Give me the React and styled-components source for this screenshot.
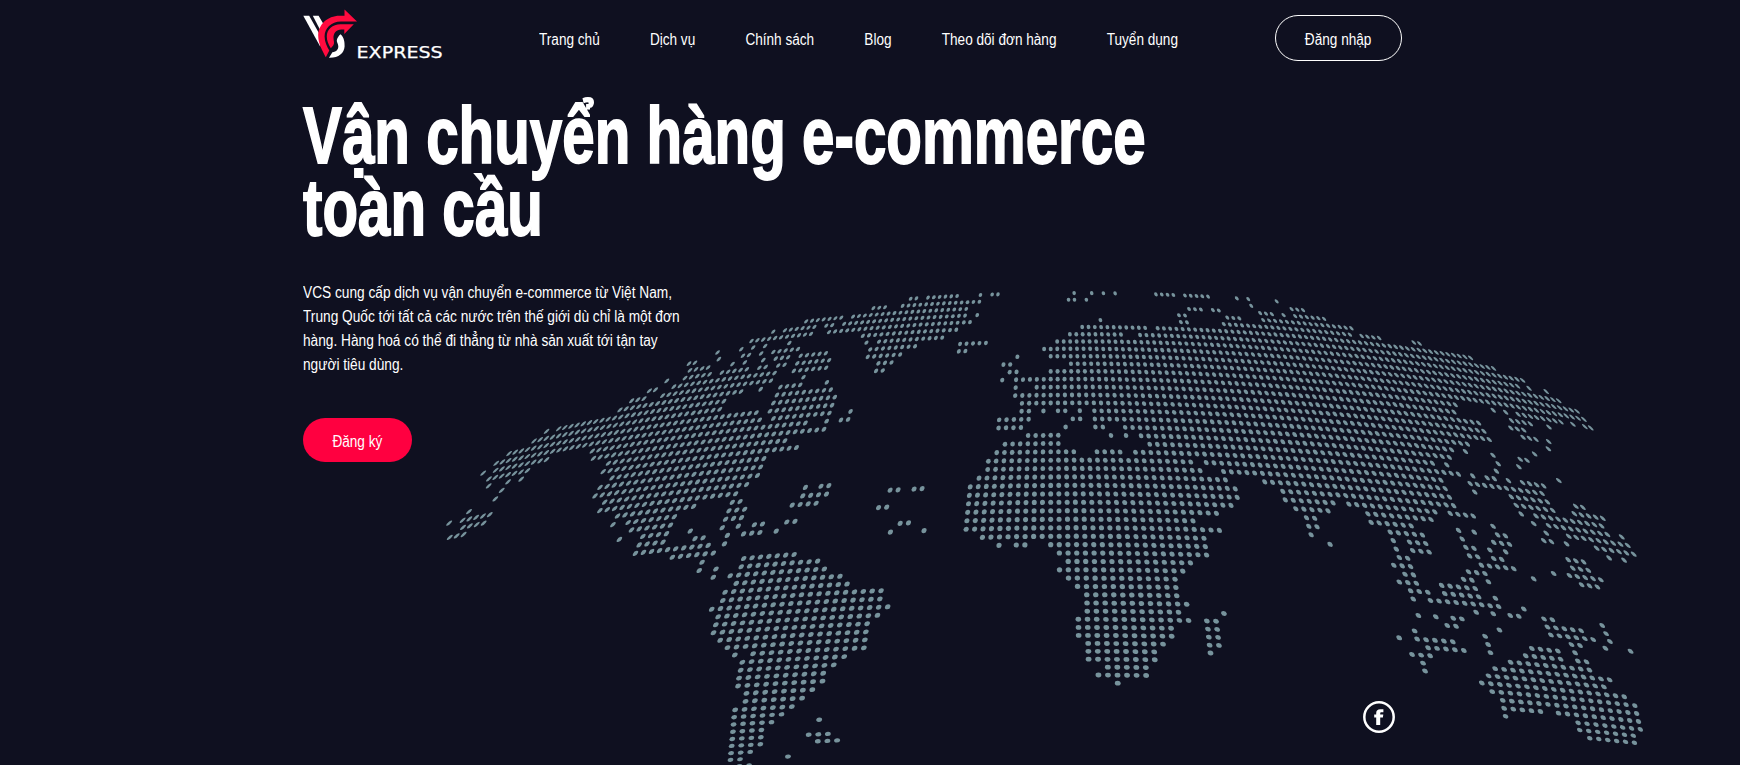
import React from "react";
import styled, { createGlobalStyle } from "styled-components";

const GlobalStyle = createGlobalStyle`
  *, *::before, *::after { box-sizing: border-box; }
  html, body { margin: 0; padding: 0; background: #0f1020; }
  body {
    overflow: hidden;
    color: #fff;
    font-family: "Liberation Sans", Arial, sans-serif;
    font-size: 16px;
  }
`;

const Page = styled.div`
  position: relative;
  width: 1740px;
  height: 765px;
  overflow: hidden;
  background: #0f1020;
`;

const Content = styled.div`
  position: relative;
  width: 1099px;
  margin-left: 303px;
  display: flex;
  flex-direction: column;
`;

const Header = styled.header`
  display: flex;
  align-items: center;
  height: 76px;
`;

const Brand = styled.a`
  display: block;
  width: 140px;
  height: 76px;
  flex: none;
`;

/* Condensed face: the regular one narrowed horizontally. */
const Nav = styled.nav`
  display: flex;
  align-items: center;
  gap: 59px;
  width: 640px;
  flex: none;
  margin-left: 96px;
  transform: scaleX(0.85);
  transform-origin: left center;
`;

const NavLink = styled.a`
  flex: none;
  color: #fff;
  white-space: nowrap;
  line-height: 24px;
  padding-top: 4px;
`;

const Button = styled.a`
  display: inline-flex;
  align-items: center;
  justify-content: center;
  width: ${(p) => p.$width}px;
  height: ${(p) => p.$height}px;
  border-radius: 23px;
  border: ${(p) => (p.$filled ? "none" : "1px solid #fff")};
  background: ${(p) => (p.$filled ? "#ff0040" : "transparent")};
  color: #fff;
  white-space: nowrap;
  padding-top: 4px;
`;

const ButtonLabel = styled.span`
  display: inline-block;
  transform: scaleX(0.85);
`;

const HeaderAction = styled.div`
  margin-left: auto;
`;

const Title = styled.h1`
  margin: 24px 0 0;
  width: max-content;
  font-size: 80px;
  line-height: 72px;
  font-weight: 700;
  white-space: nowrap;
  -webkit-text-stroke: 1.8px #fff;
  transform: scaleX(0.729);
  transform-origin: left top;
`;

const Lead = styled.p`
  margin: 37px 0 41px;
  width: max-content;
  line-height: 24px;
  white-space: nowrap;
  transform: scaleX(0.856);
  transform-origin: left top;
`;

const MapLayer = styled.svg`
  position: absolute;
  inset: 0;
  fill: #77939c;
`;

const Social = styled.a`
  position: absolute;
  left: 1363px;
  top: 701px;
  width: 32px;
  height: 32px;
`;

/* ---------- dotted globe ---------- */

const ROW_Y = [
  293.1, 299.8, 306.5, 313.2, 320, 327, 334.2, 341.4, 348.8, 356.2, 363.7, 371.3, 379.1, 387, 395,
  402.9, 410.8, 418.9, 427, 435.2, 443.4, 451.7, 460.1, 468.4, 476.8, 485.3, 493.8, 502.2, 510.7,
  519.2, 527.7, 536.2, 544.6, 553, 561.4, 569.8, 578.1, 586.4, 594.7, 603, 611.2, 619.3, 627.4,
  635.4, 643.4, 651.3, 659.2, 667.1, 675, 683, 691, 699, 706.3, 713.6, 721, 728.3, 735.3, 742.5,
  749.3, 756, 762.5,
];
const PITCH = [
  [0, 5.86], [10, 6.75], [20, 7.63], [28, 8.31], [32, 8.61], [36, 8.89], [42, 9.27], [47, 9.52],
  [52, 9.67], [60, 9.82],
];
const BEND = [[0, 0.000405], [41, 0.0002], [51, 0.000184], [60, 0.00017]];
const MERIDIAN = 1050.7;
const CREST = 1077;
const TURN = 150;

function interpolate(knots, row) {
  let i = 1;
  while (i < knots.length - 1 && knots[i][0] < row) i += 1;
  const [r0, v0] = knots[i - 1];
  const [r1, v1] = knots[i];
  return v0 + ((v1 - v0) * (row - r0)) / (r1 - r0);
}

function centreY(row) {
  const i = Math.max(0, Math.min(ROW_Y.length - 2, Math.floor(row)));
  return ROW_Y[i] + (ROW_Y[i + 1] - ROW_Y[i]) * (row - i);
}

function yAt(row, x) {
  const a = TURN * interpolate(PITCH, row);
  const d = (x - CREST) / a;
  return centreY(row) + interpolate(BEND, row) * a * a * (1 - Math.sqrt(1 - d * d));
}

function project(col, row) {
  const x = MERIDIAN + TURN * interpolate(PITCH, row) * Math.sin(col / TURN);
  return [x, yAt(row, x)];
}

function nearestRow(x, y) {
  let best = 0;
  for (let r = 1; r < ROW_Y.length; r += 1) {
    if (Math.abs(yAt(r, x) - y) < Math.abs(yAt(best, x) - y)) best = r;
  }
  return best;
}

function nearestCol(x, row) {
  return Math.round(TURN * Math.asin((x - MERIDIAN) / (TURN * interpolate(PITCH, row))));
}

/* Runs of dots: [left x, left y, right x] in thirds of a pixel from the region's corner. */
const REGIONS = [
  {
    at: [430, 280],
    runs: [
      [785, 245, 803], [771, 270, 826], [757, 294, 775], [812, 286, 833], [870, 278, 946],
      [702, 302], [650, 332, 668], [724, 320, 1030], [597, 361, 635], [692, 347, 1015],
      [564, 390, 931], [345, 452], [380, 444, 878], [310, 480, 867], [238, 517, 977],
      [202, 547, 988], [168, 574], [198, 570, 357], [487, 515, 1040], [172, 597, 285],
      [493, 537, 1040], [172, 617], [229, 604], [265, 597], [537, 550, 1040], [213, 629],
      [523, 575, 1040], [196, 655], [550, 593, 1000], [516, 622, 990], [502, 647, 980],
      [532, 665, 950], [515, 692, 917], [570, 708, 796], [557, 732], [600, 727, 738],
      [611, 750, 727], [577, 777], [645, 770, 715], [634, 794, 705], [622, 820, 836],
      [797, 775, 821], [784, 752], [730, 831, 850],
      [122, 695], [67, 728], [103, 720, 180], [105, 744, 165], [52, 775, 92],
      [906, 666, 930], [897, 692, 944], [886, 717, 934], [877, 743], [925, 738], [892, 766],
      [883, 791], [940, 762, 990], [972, 734, 997], [1037, 752],
    ],
  },
  {
    at: [700, 270],
    runs: [
      [632, 84, 650], [685, 81, 770], [841, 73], [876, 73, 894], [519, 111, 555], [607, 105, 838],
      [313, 150, 422], [457, 135, 800], [213, 180], [250, 177, 343], [376, 164, 395],
      [431, 159, 795], [831, 134], [147, 210, 334], [385, 184, 810], [60, 242], [116, 235],
      [153, 230], [191, 227], [264, 217], [487, 196, 770], [48, 266], [123, 255, 141],
      [178, 249], [215, 244, 291], [498, 216], [536, 213, 727], [0, 293, 18], [92, 281],
      [129, 276], [185, 269], [223, 265, 262], [300, 256, 378], [509, 237, 645],
      [780, 220, 857], [60, 307, 136], [0, 315, 22], [175, 292, 192], [233, 287, 250],
      [289, 278, 387], [501, 260, 600], [775, 243, 795], [10, 334, 221], [279, 303, 378],
      [533, 280, 572], [0, 358, 210], [307, 322], [527, 302, 548], [0, 380, 121], [178, 358],
      [238, 352, 299], [378, 338], [0, 404, 68], [228, 376, 391], [0, 425, 57], [217, 400, 403],
      [0, 448, 167], [208, 424, 396], [0, 471, 178], [217, 446, 387], [449, 424], [0, 493, 313],
      [377, 454], [419, 450, 442], [0, 516, 372], [0, 539, 252], [0, 563, 289], [0, 587, 192],
      [0, 611, 181], [0, 635, 171], [0, 659, 139], [0, 684, 107],
      [313, 652], [361, 648, 384], [305, 679, 376], [274, 706, 346], [260, 755, 283],
      [163, 764, 187], [567, 660, 591], [639, 656, 663], [533, 712, 557], [598, 760, 622],
    ],
  },
  {
    at: [650, 480],
    runs: [
      [10, 213, 176], [70, 231, 191], [158, 245], [149, 272], [198, 267], [190, 292],
      [232, 166], [223, 191], [281, 161, 329], [377, 153], [718, 156], [820, 151],
      [281, 235, 432], [272, 260, 502], [240, 288, 520], [257, 311, 567], [225, 338, 589],
      [218, 362, 691], [184, 390, 688], [203, 412, 711], [197, 437, 680], [190, 462, 650],
      [211, 485, 647], [232, 506, 644], [254, 528], [309, 523, 641], [277, 550, 582],
      [272, 573, 551], [268, 597, 520], [263, 620, 517], [289, 641, 487], [285, 664, 456],
      [254, 688, 425], [252, 709, 394], [249, 731, 363], [246, 754, 333], [245, 774, 331],
      [242, 796, 329], [240, 816, 300], [240, 836, 269], [268, 854, 298],
      [507, 716], [476, 760, 534], [504, 779, 563], [415, 825],
    ],
  },
  {
    at: [940, 280],
    runs: [
      [401, 40], [452, 40], [487, 40], [522, 40], [643, 42, 695], [730, 45, 800], [885, 53],
      [920, 55], [384, 59, 401], [437, 58], [741, 86, 778], [812, 90, 830], [929, 76],
      [713, 105, 730], [720, 126, 737], [856, 112, 892], [955, 98], [478, 120],
      [424, 141, 612], [648, 145, 960], [846, 133, 960], [388, 162, 543], [597, 164, 960],
      [350, 184, 960], [311, 206, 960], [231, 230], [330, 229, 960], [189, 253, 209],
      [390, 251, 960], [207, 276, 228], [330, 274, 960], [185, 299], [228, 298, 960],
      [225, 322], [289, 321, 960], [224, 346, 960], [244, 369, 960], [243, 393, 265],
      [309, 392], [352, 392, 374], [418, 392], [462, 392, 960], [175, 419, 265],
      [397, 416, 418], [463, 416, 960], [173, 442, 242], [375, 440], [465, 441, 487],
      [554, 442, 960], [262, 466, 355], [512, 466], [557, 466], [602, 467, 960],
      [193, 491, 355], [628, 492, 960], [168, 517, 402], [470, 515, 541], [586, 516, 960],
      [143, 543, 753], [797, 547, 960], [141, 568, 780], [850, 575, 960], [115, 594, 856],
    ],
  },
  {
    at: [950, 450],
    runs: [
      [58, 109, 857], [56, 135, 861], [53, 161, 843], [51, 186, 800], [49, 211, 729],
      [46, 237, 809], [95, 261, 764], [146, 285], [198, 284, 224], [302, 284, 767],
      [328, 308, 771], [354, 333, 723], [328, 359, 700], [355, 384, 677], [383, 409, 680],
      [411, 434, 683], [412, 460, 712], [413, 484, 688], [386, 508, 718], [387, 532, 666],
      [388, 556, 668], [417, 580, 642], [417, 604, 616], [418, 628, 618], [475, 652, 590],
      [448, 675, 592], [506, 698], [825, 490], [773, 514, 801], [776, 538, 803],
      [779, 562, 806], [782, 586, 809], [785, 610],
    ],
  },
  {
    at: [1230, 280],
    runs: [
      [15, 54], [50, 55], [60, 76], [136, 62], [181, 84, 216], [86, 98, 121], [156, 104],
      [191, 106, 280], [0, 113, 22], [95, 119, 362], [0, 133, 357], [388, 167, 448],
      [549, 187, 572], [0, 154, 697], [728, 233], [0, 176, 783], [0, 197, 885], [0, 219, 868],
      [900, 327], [952, 335], [0, 241, 988], [0, 264, 1040], [0, 286, 1055], [0, 309, 675],
      [781, 392], [819, 399], [873, 406, 967], [1001, 430], [1037, 438], [1072, 444, 1090],
      [0, 333, 668], [851, 426, 893], [963, 447], [0, 357, 740], [849, 449, 887],
      [0, 380, 756], [882, 476, 922], [957, 490], [0, 404, 787], [955, 511], [0, 428, 722],
      [915, 527], [0, 452, 655], [713, 519], [873, 542, 893], [795, 530], [0, 477, 668],
      [808, 556], [869, 565], [0, 501, 600], [658, 558], [803, 578], [0, 526, 632],
      [672, 584, 692], [735, 592], [773, 597, 798], [838, 605], [980, 604], [877, 610, 938],
      [0, 550, 625], [726, 613, 932], [0, 575, 635], [741, 640], [844, 652, 950],
      [102, 606, 648], [858, 678, 965], [155, 634, 660], [163, 660, 307], [350, 672, 606],
      [666, 702, 739], [196, 686, 292], [408, 702, 525], [567, 715, 597], [229, 713, 251],
      [236, 738, 258], [244, 764], [290, 792],
    ],
  },
  {
    at: [1340, 440],
    runs: [
      [78, 222, 196], [239, 237, 263], [87, 247, 205], [144, 276, 238], [154, 301],
      [201, 306, 250], [163, 327], [210, 331, 260], [172, 353, 197], [157, 376, 206],
      [190, 403, 216], [175, 426, 224], [208, 454, 258], [217, 478], [267, 482, 465],
      [307, 461, 406], [298, 436, 397], [361, 417, 385], [374, 394], [232, 527], [284, 532],
      [335, 536, 360], [317, 558, 343], [222, 575], [176, 596], [229, 600, 334],
      [262, 625, 367], [214, 646, 269], [248, 671], [256, 695], [401, 518], [450, 522],
      [478, 477], [456, 427], [422, 399, 445], [433, 377, 527], [399, 349, 421],
      [468, 356, 490], [387, 324, 411], [456, 331], [502, 337], [376, 298], [467, 309, 511],
      [364, 272], [409, 278], [475, 286, 498], [463, 260], [340, 222, 407], [583, 417],
      [638, 400], [560, 510], [523, 529, 547], [469, 572], [428, 592], [436, 616], [445, 640],
      [620, 538, 643], [631, 564, 726], [641, 588, 761], [701, 619, 725], [712, 643],
      [783, 557], [795, 582], [808, 607], [797, 629], [867, 637], [543, 223], [583, 229, 787],
      [716, 202, 737], [711, 223, 793], [578, 251], [620, 258, 803], [842, 290], [613, 279],
      [696, 291, 860], [605, 300, 627], [669, 310, 690], [772, 325, 892], [808, 352],
      [850, 359], [676, 357, 740], [690, 383], [733, 388, 755], [682, 404, 791],
      [717, 433, 761], [588, 629, 664], [547, 649, 674], [722, 667, 747], [504, 668, 758],
      [460, 688, 819], [442, 709, 804], [422, 731, 814], [865, 774], [456, 757, 876],
      [489, 783, 886], [496, 806, 606], [658, 821, 896], [503, 829], [719, 849, 907],
      [728, 872, 888], [762, 897, 872],
    ],
  },
];

function buildDots() {
  const dots = new Map();
  REGIONS.forEach(({ at, runs }) => {
    runs.forEach(([x0, y0, x1 = x0]) => {
      const left = at[0] + x0 / 3;
      const row = nearestRow(left, at[1] + y0 / 3);
      const from = nearestCol(left, row);
      const to = nearestCol(at[0] + x1 / 3, row);
      for (let col = from; col <= to; col += 1) dots.set(`${row}:${col}`, [col, row]);
    });
  });
  return [...dots.entries()].map(([key, [col, row]]) => {
    const [x, y] = project(col, row);
    const [ux, uy] = project(col + 0.5, row);
    const [lx, ly] = project(col - 0.5, row);
    const [bx, by] = project(col, row + 0.5);
    const [tx, ty] = project(col, Math.max(0, row - 0.5));
    const k = row === 0 ? 2 : 1;
    const m = [ux - lx, uy - ly, (bx - tx) * k, (by - ty) * k, x, y].map((v) => v.toFixed(2));
    return { key, transform: `matrix(${m.join(" ")})` };
  });
}

const DOTS = buildDots();

function WorldMap() {
  return (
    <MapLayer width="1740" height="765" viewBox="0 0 1740 765" aria-hidden="true">
      {DOTS.map((d) => (
        <circle key={d.key} r="0.305" transform={d.transform} />
      ))}
    </MapLayer>
  );
}

function Logo() {
  return (
    <svg width="140" height="76" viewBox="0 0 140 76" role="img" aria-label="VCS Express">
      <g fill="#fff">
        <path d="M0.3 15.7H6.2L17.3 35.5V46.8Z" />
        <path d="M9.8 15.7H15.6L20.3 23.7L16.8 29.2Z" />
        <path d="M37.5 34.3C41.3 37.3 41.8 43 41.6 46.5C41.2 53.3 35.5 58 26 57.7L29.4 52.2C33.5 51.6 35.4 49.3 35.3 46.2C35.2 43.8 33.6 42.2 33.8 40.2C34 38.3 35.6 36 37.5 34.3Z" />
      </g>
      <g fill="#ff0b3f">
        <path d="M41.5 9.5L54 21.5H38C28 21.5 21.6 28.5 21.6 36.5C21.6 42 24 46.5 26.3 50.5L22.8 57.3C19.2 50.5 15.2 43.5 15.2 35.8C15.2 24.5 24.5 15.7 36.5 15.7H41.5Z" />
        <path d="M50.8 24.3L41.3 34V29.5H38.5C33 29.5 30.3 33.3 30.5 38C30.6 41 31.8 43.3 30.2 45.5L27.8 48.2C25.2 44 23.8 40.5 23.8 36.5C23.8 29.5 29.5 24.3 37.5 24.3Z" />
      </g>
      <text
        x="53.6"
        y="58"
        fill="#fff"
        stroke="#fff"
        strokeWidth="0.25"
        fontFamily="'DejaVu Sans', sans-serif"
        fontSize="15.8"
        textLength="86"
        lengthAdjust="spacingAndGlyphs"
      >
        EXPRESS
      </text>
    </svg>
  );
}

function FacebookIcon() {
  return (
    <svg width="32" height="32" viewBox="0 0 32 32" role="img" aria-label="Facebook">
      <circle cx="16" cy="16" r="14.7" fill="none" stroke="#fff" strokeWidth="2.5" />
      <path
        fill="#fff"
        d="M13.2 24V16.4H11.2V13.4H13.2V12C13.2 9.4 14.8 8.2 17.2 8.2H20.4V11.2H18.6C17.5 11.2 17.2 11.6 17.2 12.5V13.4H20.3L19.9 16.4H17.2V24Z"
      />
    </svg>
  );
}

const LINKS = ["Trang chủ", "Dịch vụ", "Chính sách", "Blog", "Theo dõi đơn hàng", "Tuyển dụng"];

export default function App() {
  return (
    <Page>
      <GlobalStyle />
      <WorldMap />
      <Content>
        <Header>
          <Brand>
            <Logo />
          </Brand>
          <Nav>
            {LINKS.map((label) => (
              <NavLink key={label}>{label}</NavLink>
            ))}
          </Nav>
          <HeaderAction>
            <Button $width={127} $height={46}>
              <ButtonLabel>Đăng nhập</ButtonLabel>
            </Button>
          </HeaderAction>
        </Header>
        <Title>
          Vận chuyển hàng e-commerce
          <br />
          toàn cầu
        </Title>
        <Lead>
          VCS cung cấp dịch vụ vận chuyển e-commerce từ Việt Nam,
          <br />
          Trung Quốc tới tất cả các nước trên thế giới dù chỉ là một đơn
          <br />
          hàng. Hàng hoá có thể đi thẳng từ nhà sản xuất tới tận tay
          <br />
          người tiêu dùng.
        </Lead>
        <div>
          <Button $filled $width={109} $height={44}>
            <ButtonLabel>Đăng ký</ButtonLabel>
          </Button>
        </div>
      </Content>
      <Social>
        <FacebookIcon />
      </Social>
    </Page>
  );
}
